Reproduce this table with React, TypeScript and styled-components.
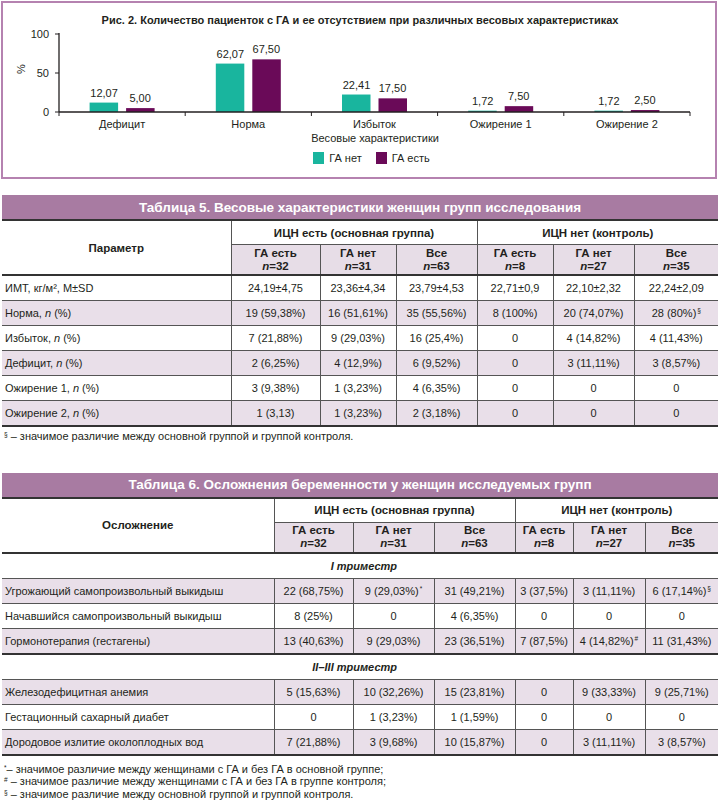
import React from 'react';
import styled, { createGlobalStyle } from 'styled-components';

const GlobalStyle = createGlobalStyle`
  html, body { margin: 0; padding: 0; background: #fff; }
  body { font-family: "Liberation Sans", Arial, sans-serif; color: #231f20; }
`;

const TEAL = '#19b59e';
const PLUM = '#6a0a58';
const INK = '#231f20';

const Page = styled.div`
  width: 720px;
  padding-top: 1px;
`;

const Figure = styled.figure`
  margin: 0 0 0 1px;
  width: 716px;
  height: 178px;
  box-sizing: border-box;
  border: 2px solid #b582b0;
  display: flex;
  flex-direction: column;
`;

const FigTitle = styled.div`
  padding-top: 11px;
  font-size: 11px;
  line-height: 13px;
  font-weight: bold;
  text-align: center;
  padding-left: 2px;
`;

const Plot = styled.svg`
  display: block;
  flex: none;
`;

const AxisTitle = styled.div`
  font-size: 11px;
  line-height: 14px;
  text-align: center;
  padding-left: 32px;
`;

const Legend = styled.div`
  display: flex;
  justify-content: center;
  align-items: center;
  gap: 14px;
  margin-top: 6px;
  padding-left: 25px;
  font-size: 11px;
  line-height: 14px;
`;

const LegendItem = styled.div`
  display: flex;
  align-items: center;
  gap: 5px;
`;

const Swatch = styled.span<{ $c: string }>`
  width: 11px;
  height: 12px;
  background: ${(p) => p.$c};
  display: inline-block;
`;

const Table = styled.table<{ $mt: number }>`
  margin: ${(p) => p.$mt}px 0 0 2px;
  width: 716px;
  border-collapse: collapse;
  table-layout: fixed;
  font-size: 11px;
  color: ${INK};
  border-bottom: 2px solid #333;
`;

const Col = styled.col<{ $w: number }>`
  width: ${(p) => p.$w}px;
`;

const TitleCell = styled.th`
  background: #a87ba2;
  color: #fff;
  font-size: 13.5px;
  font-weight: bold;
  height: 24px;
  padding: 0;
  text-align: center;
  border-bottom: 2px solid #333;
`;

const ParamTh = styled.th`
  font-size: 11.5px;
  font-weight: bold;
  text-align: center;
  padding: 0;
  border-bottom: 2px solid #333;
`;

const GroupTh = styled.th`
  font-size: 11.5px;
  font-weight: bold;
  height: 23px;
  padding: 0;
  text-align: center;
  border-left: 1px solid #555;
  border-bottom: 1px solid #555;
`;

const SubTh = styled.th`
  background: #e7dde7;
  font-size: 11.5px;
  font-weight: bold;
  height: 29px;
  line-height: 13px;
  padding: 0;
  text-align: center;
  border-left: 1px solid #555;
  border-bottom: 2px solid #333;
`;

const Row = styled.tr<{ $shade: boolean }>`
  background: ${(p) => (p.$shade ? '#e9dfe9' : '#fff')};
`;

const LabelTd = styled.td`
  height: 24px;
  padding: 0 0 0 3px;
  text-align: left;
  border-bottom: 1px solid #555;
  white-space: nowrap;
`;

const Td = styled.td`
  height: 24px;
  padding: 0;
  text-align: center;
  border-left: 1px solid #555;
  border-bottom: 1px solid #555;
  white-space: nowrap;
`;

const SectionTd = styled.td<{ $top: boolean }>`
  height: 24px;
  padding: 0 321px 0 0;
  text-align: right;
  font-weight: bold;
  font-style: italic;
  background: #fff;
  border-top: ${(p) => (p.$top ? '2px solid #333' : 'none')};
  border-bottom: 1px solid #555;
`;

const Sup = styled.sup`
  font-size: 6.5px;
  line-height: 0;
  vertical-align: 4px;
  margin-left: 1px;
`;

const Notes = styled.div<{ $mt: number }>`
  margin: ${(p) => p.$mt}px 0 0 4px;
  font-size: 11px;
  line-height: 12.5px;
`;

const NoteSup = styled.sup`
  font-size: 6.5px;
  line-height: 0;
  vertical-align: 3px;
`;

type Cat = [string, number, number];
const cats: Cat[] = [
  ['Дефицит', 12.07, 5.0],
  ['Норма', 62.07, 67.5],
  ['Избыток', 22.41, 17.5],
  ['Ожирение 1', 1.72, 7.5],
  ['Ожирение 2', 1.72, 2.5],
];

const fmt = (v: number) => v.toFixed(2).replace('.', ',');

const X0 = 59;
const X1 = 690;
const BASE = 112;
const K = 0.78;
const STEP = (X1 - X0) / 5;

function Chart() {
  return (
    <Plot width={712} height={104} viewBox="3 27 712 104">
      <g fontFamily='"Liberation Sans", Arial, sans-serif' fontSize="11" fill={INK}>
        {cats.map(([name, a, b], i) => {
          const cx = X0 + STEP * (i + 0.5);
          const ha = a * K;
          const hb = b * K;
          return (
            <g key={name}>
              <rect x={cx - 32.5} y={BASE - ha} width={28.5} height={ha} fill={TEAL} />
              <rect x={cx + 4} y={BASE - hb} width={28.5} height={hb} fill={PLUM} />
              <text x={cx - 18} y={BASE - ha - 6} textAnchor="middle">{fmt(a)}</text>
              <text x={cx + 18} y={BASE - hb - 6} textAnchor="middle">{fmt(b)}</text>
              <text x={cx} y={128} textAnchor="middle">{name}</text>
            </g>
          );
        })}
        {[0, 1, 2, 3, 4, 5].map((i) => (
          <line key={i} x1={X0 + STEP * i} x2={X0 + STEP * i} y1={BASE} y2={BASE + 4} stroke={INK} strokeWidth={1} />
        ))}
        <line x1={X0} x2={X1} y1={BASE} y2={BASE} stroke={INK} strokeWidth={1.3} />
        <line x1={X0} x2={X0} y1={33} y2={BASE} stroke={INK} strokeWidth={1.3} />
        {[
          [100, 34],
          [50, 73],
          [0, 112],
        ].map(([v, y]) => (
          <g key={v}>
            <line x1={X0 - 4} x2={X0} y1={y} y2={y} stroke={INK} strokeWidth={1} />
            <text x={49} y={y + 4} textAnchor="end">{v}</text>
          </g>
        ))}
        <text x={29} y={73} textAnchor="middle" transform="rotate(-90 25 73)">%</text>
      </g>
    </Plot>
  );
}

const Italic = styled.i``;

function Cell({ v }: { v: string }) {
  const [main, sup] = v.split('^');
  return (
    <>
      {main}
      {sup ? <Sup>{sup}</Sup> : null}
    </>
  );
}

function Label({ t }: { t: string }) {
  const parts = t.split('{n}');
  if (parts.length === 1) return <>{t}</>;
  return (
    <>
      {parts[0]}
      <Italic>n</Italic>
      {parts[1]}
    </>
  );
}

const subs: [string, number][] = [
  ['ГА есть', 32],
  ['ГА нет', 31],
  ['Все', 63],
  ['ГА есть', 8],
  ['ГА нет', 27],
  ['Все', 35],
];

function Head({ title, param }: { title: string; param: string }) {
  return (
    <thead>
      <tr>
        <TitleCell colSpan={7}>{title}</TitleCell>
      </tr>
      <tr>
        <ParamTh rowSpan={2}>{param}</ParamTh>
        <GroupTh colSpan={3}>ИЦН есть (основная группа)</GroupTh>
        <GroupTh colSpan={3}>ИЦН нет (контроль)</GroupTh>
      </tr>
      <tr>
        {subs.map(([g, n], i) => (
          <SubTh key={i}>
            {g}
            <br />
            <Italic>n</Italic>={n}
          </SubTh>
        ))}
      </tr>
    </thead>
  );
}

const rows5: string[][] = [
  ['ИМТ, кг/м², M±SD', '24,19±4,75', '23,36±4,34', '23,79±4,53', '22,71±0,9', '22,10±2,32', '22,24±2,09'],
  ['Норма, {n} (%)', '19 (59,38%)', '16 (51,61%)', '35 (55,56%)', '8 (100%)', '20 (74,07%)', '28 (80%)^§'],
  ['Избыток, {n} (%)', '7 (21,88%)', '9 (29,03%)', '16 (25,4%)', '0', '4 (14,82%)', '4 (11,43%)'],
  ['Дефицит, {n} (%)', '2 (6,25%)', '4 (12,9%)', '6 (9,52%)', '0', '3 (11,11%)', '3 (8,57%)'],
  ['Ожирение 1, {n} (%)', '3 (9,38%)', '1 (3,23%)', '4 (6,35%)', '0', '0', '0'],
  ['Ожирение 2, {n} (%)', '1 (3,13)', '1 (3,23%)', '2 (3,18%)', '0', '0', '0'],
];

const sections6: { title: string; rows: string[][] }[] = [
  {
    title: 'I триместр',
    rows: [
      ['Угрожающий самопроизвольный выкидыш', '22 (68,75%)', '9 (29,03%)^*', '31 (49,21%)', '3 (37,5%)', '3 (11,11%)', '6 (17,14%)^§'],
      ['Начавшийся самопроизвольный выкидыш', '8 (25%)', '0', '4 (6,35%)', '0', '0', '0'],
      ['Гормонотерапия (гестагены)', '13 (40,63%)', '9 (29,03%)', '23 (36,51%)', '7 (87,5%)', '4 (14,82%)^#', '11 (31,43%)'],
    ],
  },
  {
    title: 'II–III триместр',
    rows: [
      ['Железодефицитная анемия', '5 (15,63%)', '10 (32,26%)', '15 (23,81%)', '0', '9 (33,33%)', '9 (25,71%)'],
      ['Гестационный сахарный диабет', '0', '1 (3,23%)', '1 (1,59%)', '0', '0', '0'],
      ['Дородовое излитие околоплодных вод', '7 (21,88%)', '3 (9,68%)', '10 (15,87%)', '0', '3 (11,11%)', '3 (8,57%)'],
    ],
  },
];

const cols5 = [229, 89, 76, 81, 76, 81, 84];
const cols6 = [272, 79, 81, 81, 58, 72, 73];

function DataRow({ r, shade }: { r: string[]; shade: boolean }) {
  return (
    <Row $shade={shade}>
      <LabelTd>
        <Label t={r[0]} />
      </LabelTd>
      {r.slice(1).map((v, j) => (
        <Td key={j}>
          <Cell v={v} />
        </Td>
      ))}
    </Row>
  );
}

export default function App() {
  return (
    <Page>
      <GlobalStyle />
      <Figure>
        <FigTitle>Рис. 2. Количество пациенток с ГА и ее отсутствием при различных весовых характеристиках</FigTitle>
        <Chart />
        <AxisTitle>Весовые характеристики</AxisTitle>
        <Legend>
          <LegendItem>
            <Swatch $c={TEAL} />
            ГА нет
          </LegendItem>
          <LegendItem>
            <Swatch $c={PLUM} />
            ГА есть
          </LegendItem>
        </Legend>
      </Figure>

      <Table $mt={16}>
        <colgroup>
          {cols5.map((w, i) => (
            <Col key={i} $w={w} />
          ))}
        </colgroup>
        <Head title="Таблица 5. Весовые характеристики женщин групп исследования" param="Параметр" />
        <tbody>
          {rows5.map((r, i) => (
            <DataRow key={i} r={r} shade={i % 2 === 1} />
          ))}
        </tbody>
      </Table>
      <Notes $mt={3}>
        <div>
          <NoteSup>§</NoteSup> – значимое различие между основной группой и группой контроля.
        </div>
      </Notes>

      <Table $mt={30}>
        <colgroup>
          {cols6.map((w, i) => (
            <Col key={i} $w={w} />
          ))}
        </colgroup>
        <Head title="Таблица 6. Осложнения беременности у женщин исследуемых групп" param="Осложнение" />
        <tbody>
          {sections6.map((s, si) => (
            <React.Fragment key={si}>
              <tr>
                <SectionTd colSpan={7} $top={si > 0}>
                  {s.title}
                </SectionTd>
              </tr>
              {s.rows.map((r, i) => (
                <DataRow key={i} r={r} shade={i % 2 === 0} />
              ))}
            </React.Fragment>
          ))}
        </tbody>
      </Table>
      <Notes $mt={7}>
        <div>
          <NoteSup>*</NoteSup>– значимое различие между женщинами с ГА и без ГА в основной группе;
        </div>
        <div>
          <NoteSup>#</NoteSup> – значимое различие между женщинами с ГА и без ГА в группе контроля;
        </div>
        <div>
          <NoteSup>§</NoteSup> – значимое различие между основной группой и группой контроля.
        </div>
      </Notes>
    </Page>
  );
}
